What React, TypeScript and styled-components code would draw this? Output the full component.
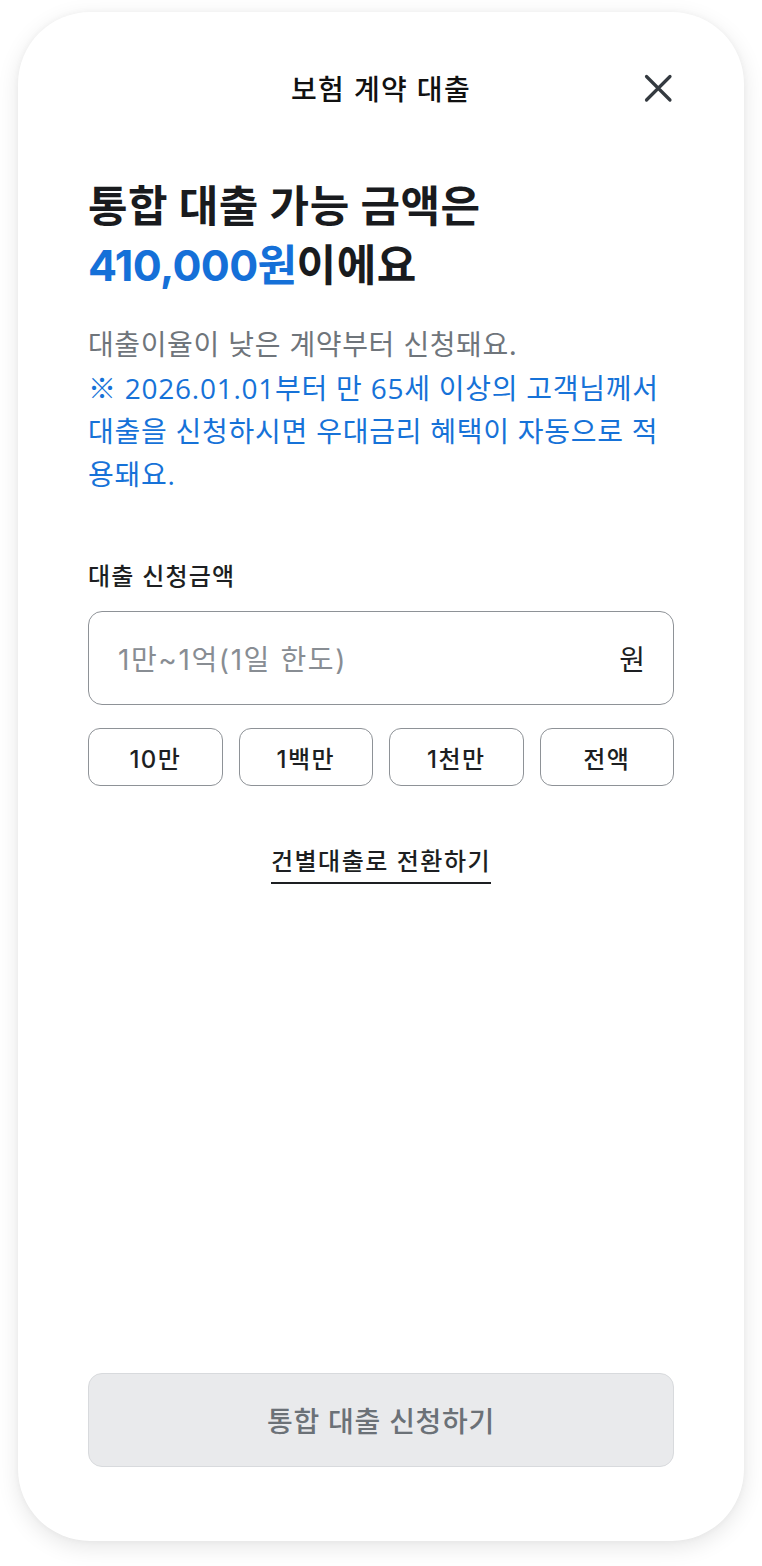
import styled, { createGlobalStyle } from 'styled-components'

const FONT = `Inter, "Noto Sans CJK KR", sans-serif`

const GlobalStyle = createGlobalStyle`
  html, body {
    margin: 0;
    padding: 0;
    background: #ffffff;
  }
  body {
    font-family: ${FONT};
    -webkit-font-smoothing: antialiased;
  }
`

const QUICK_AMOUNTS = ['10만', '1백만', '1천만', '전액']

function CloseIcon() {
  return (
    <svg width="32" height="32" viewBox="0 0 32 32" fill="none">
      <path d="M4.5 4.5L28 28M28 4.5L4.5 28" stroke="#343a40" strokeWidth="3.2" strokeLinecap="round" />
    </svg>
  )
}

export default function App() {
  return (
    <>
      <GlobalStyle />
      <Page>
        <Card>
          <Header>
            <span />
            <HeaderTitle>보험 계약 대출</HeaderTitle>
            <CloseButton aria-label="닫기">
              <CloseIcon />
            </CloseButton>
          </Header>

          <Heading>
            통합 대출 가능 금액은
            <br />
            <Amount>410,000원</Amount>이에요
          </Heading>

          <Description>
            <Gray>대출이율이 낮은 계약부터 신청돼요.</Gray>
            <Notice>※ 2026.01.01부터 만 65세 이상의 고객님께서 대출을 신청하시면 우대금리 혜택이 자동으로 적용돼요.</Notice>
          </Description>

          <FieldLabel>대출 신청금액</FieldLabel>
          <InputBox>
            <Placeholder>1만~1억(1일 한도)</Placeholder>
            <Unit>원</Unit>
          </InputBox>

          <QuickRow>
            {QUICK_AMOUNTS.map(label => (
              <QuickButton key={label}>{label}</QuickButton>
            ))}
          </QuickRow>

          <SwitchRow>
            <SwitchLink>건별대출로 전환하기</SwitchLink>
          </SwitchRow>

          <SubmitButton disabled>통합 대출 신청하기</SubmitButton>
        </Card>
      </Page>
    </>
  )
}

const Page = styled.div`
  padding: 12px 18px 25px;
`

const Card = styled.div`
  box-sizing: border-box;
  width: 726px;
  height: 1529px;
  border-radius: 72px;
  background: #ffffff;
  box-shadow: 0 6px 22px rgba(0, 0, 0, 0.1), 0 0 6px rgba(0, 0, 0, 0.04);
  padding: 48px 70px 74px;
  display: flex;
  flex-direction: column;
`

const Header = styled.div`
  display: grid;
  grid-template-columns: 32px 1fr 32px;
  align-items: center;
  height: 56px;
`

const HeaderTitle = styled.h1`
  margin: 0;
  text-align: center;
  font-size: 28px;
  font-weight: 500;
  color: #111111;
  letter-spacing: 1.3px;
`

const CloseButton = styled.button`
  border: none;
  background: none;
  padding: 0;
  width: 32px;
  height: 32px;
  display: flex;
  cursor: pointer;
`

const Heading = styled.h2`
  margin: 61px 0 0;
  font-size: 43px;
  line-height: 59px;
  font-weight: 700;
  color: #191b1e;
  letter-spacing: 0.5px;
`

const Amount = styled.span`
  color: #1570d8;
  letter-spacing: -0.6px;
`

const Description = styled.div`
  margin-top: 29px;
  font-size: 28px;
  line-height: 43px;
  letter-spacing: 0.6px;
`

const Gray = styled.p`
  margin: 0;
  color: #6f757b;
`

const Notice = styled.p`
  margin: 0;
  color: #1672d8;
  font-family: "Open Sans", "Noto Sans CJK KR", sans-serif;
  letter-spacing: 0.75px;
`

const FieldLabel = styled.div`
  margin-top: 66px;
  font-size: 24px;
  line-height: 30px;
  font-weight: 500;
  color: #1d1f22;
  letter-spacing: 1.2px;
`

const InputBox = styled.div`
  box-sizing: border-box;
  margin-top: 19px;
  height: 94px;
  border: 1.5px solid #8e9297;
  border-radius: 14px;
  padding: 0 28px 0 29px;
  display: flex;
  align-items: center;
  justify-content: space-between;
  font-size: 28px;
  letter-spacing: 1.6px;
`

const Placeholder = styled.span`
  color: #888d93;
`

const Unit = styled.span`
  color: #1d1f22;
  letter-spacing: 0;
`

const QuickRow = styled.div`
  margin-top: 23px;
  display: grid;
  grid-template-columns: repeat(4, 1fr);
  gap: 16px;
`

const QuickButton = styled.button`
  box-sizing: border-box;
  height: 58px;
  border: 1.5px solid #8e9297;
  border-radius: 12px;
  background: #ffffff;
  font-family: ${FONT};
  font-size: 24px;
  font-weight: 500;
  color: #1d1f22;
  letter-spacing: 1.4px;
  padding: 0;
  cursor: pointer;
`

const SwitchRow = styled.div`
  margin-top: 61px;
  display: flex;
  justify-content: center;
`

const SwitchLink = styled.a`
  font-size: 24px;
  line-height: 30px;
  font-weight: 500;
  color: #1d1f22;
  letter-spacing: 1.5px;
  padding-bottom: 5px;
  border-bottom: 2px solid #1d1f22;
  cursor: pointer;
`

const SubmitButton = styled.button`
  box-sizing: border-box;
  margin-top: auto;
  height: 94px;
  border: 1.5px solid #d8dadd;
  border-radius: 14px;
  background: #e9eaec;
  font-family: ${FONT};
  font-size: 28px;
  font-weight: 500;
  color: #6b7177;
  letter-spacing: 0.7px;
`
